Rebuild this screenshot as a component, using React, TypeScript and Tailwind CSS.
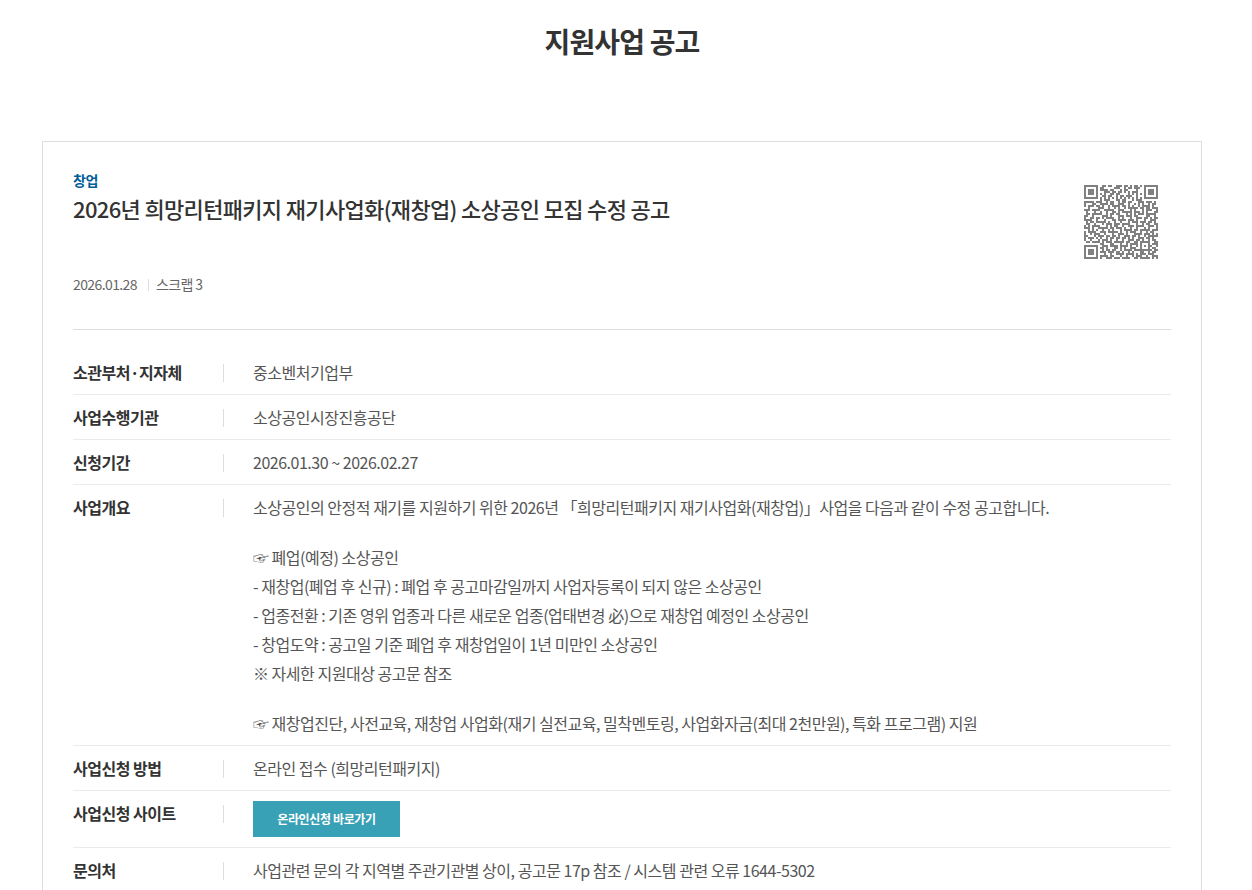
import React from 'react';

const QR_ROWS = [
  '1111111001101100111011010110101111111',
  '1000001011000001110010110111001000001',
  '1011101011110110001011000010001011101',
  '1011101000111011011010101110001011101',
  '1011101010100110110000101010101011101',
  '1000001001101100101101110010001000001',
  '1111111010101010101010101010101111111',
  '0000000010111000110110001011100000000',
  '1111101110010110010110110001110111010',
  '1000110011110110011100100101010010110',
  '1011101101001011110110101001011110100',
  '0010000111001001010010111110110110111',
  '1110111100111110011100010100010111001',
  '0100010010010011010111110111010100011',
  '0110111110010110110001010101110111110',
  '1100100001110100011101110110000110010',
  '1001101101011110010100010011101101011',
  '1111001000100011011110111010001001110',
  '0101101111101001001000101110111011010',
  '0110010001011101110111100010010110011',
  '1010111100010101100100111011110011101',
  '1110100111110110111010010010001010001',
  '0010101001001010001011110110111110111',
  '1011110011101111101001011100100101100',
  '1001011100100010011101000111101110101',
  '1100010111011011010011101101001011111',
  '1011101010010110110110101001110110100',
  '1001000101110100100100111011010010110',
  '0110111101011101111101100110111110011',
  '0000000011000110001001011110100010111',
  '1111111001110111101111010010101011001',
  '1000001011010001101010011100100010110',
  '1011101001011011001011110111111111011',
  '1011101011101110110100101000110010110',
  '1011101000100100111101111010111011100',
  '1000001011110110001001001011100100111',
  '1111111010011101110111100110111110101',
];

const QrCode: React.FC = () => (
  <svg className="w-[74px] h-[74px]" viewBox="0 0 37 37" shapeRendering="crispEdges" fill="#808080">
    {QR_ROWS.map((row, y) =>
      row.split('').map((cell, x) =>
        cell === '1' ? <rect key={`${x}-${y}`} x={x} y={y} width="1" height="1" /> : null
      )
    )}
  </svg>
);

interface RowProps {
  label: string;
  children: React.ReactNode;
}

const InfoRow: React.FC<RowProps> = ({ label, children }) => (
  <li className="flex border-b border-[#ebebeb] pt-2 pb-[7px]">
    <strong className="w-[150px] shrink-0 font-bold text-[#333] leading-[29px]">{label}</strong>
    <span className="w-px h-[18px] mt-[6px] mr-[29px] shrink-0 bg-[#ddd]" />
    <div className="flex-1 text-[#555] leading-[29px] whitespace-nowrap">{children}</div>
  </li>
);

const App: React.FC = () => {
  return (
    <div className="w-[1244px] h-[890px] overflow-hidden bg-white font-['Noto_Sans_CJK_KR',sans-serif] tracking-[-0.03em]">
      <h2 className="pt-5 text-center text-[28px] leading-[42px] font-bold text-[#333] tracking-[-0.03em]">지원사업 공고</h2>

      <div className="w-[1160px] h-[800px] mx-auto mt-[79px] border border-[#ddd] px-[30px]">
        <div className="flex justify-between h-[188px] border-b border-[#ddd]">
          <div className="pt-7">
            <span className="block text-sm leading-[21px] font-bold text-[#006097]">창업</span>
            <h3 className="text-[22px] leading-[34px] font-medium text-[#333] tracking-[-0.03em]">
              2026년 희망리턴패키지 재기사업화(재창업) 소상공인 모집 수정 공고
            </h3>
            <div className="flex items-center mt-[49px] text-sm leading-[21px] text-[#666] tracking-[-0.6px]">
              <span>2026.01.28</span>
              <span className="w-px h-3 ml-[11px] mr-[7px] bg-[#ddd]" />
              <span>스크랩 3</span>
            </div>
          </div>
          <div className="pt-[43px] pr-[13px]">
            <QrCode />
          </div>
        </div>

        <ul className="pt-5 text-base">
          <InfoRow label="소관부처·지자체">중소벤처기업부</InfoRow>
          <InfoRow label="사업수행기관">소상공인시장진흥공단</InfoRow>
          <InfoRow label="신청기간">2026.01.30 ~ 2026.02.27</InfoRow>
          <InfoRow label="사업개요">
            <p>소상공인의 안정적 재기를 지원하기 위한 2026년 「희망리턴패키지 재기사업화(재창업)」사업을 다음과 같이 수정 공고합니다.</p>
            <div className="my-[21px]">
              <p>☞ 폐업(예정) 소상공인</p>
              <p>- 재창업(폐업 후 신규) : 폐업 후 공고마감일까지 사업자등록이 되지 않은 소상공인</p>
              <p>- 업종전환 : 기존 영위 업종과 다른 새로운 업종(업태변경 必)으로 재창업 예정인 소상공인</p>
              <p>- 창업도약 : 공고일 기준 폐업 후 재창업일이 1년 미만인 소상공인</p>
              <p>※ 자세한 지원대상 공고문 참조</p>
            </div>
            <p>☞ 재창업진단, 사전교육, 재창업 사업화(재기 실전교육, 밀착멘토링, 사업화자금(최대 2천만원), 특화 프로그램) 지원</p>
          </InfoRow>
          <InfoRow label="사업신청 방법">온라인 접수 (희망리턴패키지)</InfoRow>
          <InfoRow label="사업신청 사이트">
            <button className="block mt-0.5 mb-[3px] w-[147px] h-9 bg-[#38a1b6] text-xs font-bold text-white tracking-[-0.03em]">
              온라인신청 바로가기
            </button>
          </InfoRow>
          <InfoRow label="문의처">사업관련 문의 각 지역별 주관기관별 상이, 공고문 17p 참조 / 시스템 관련 오류 1644-5302</InfoRow>
        </ul>
      </div>
    </div>
  );
};

export default App;
